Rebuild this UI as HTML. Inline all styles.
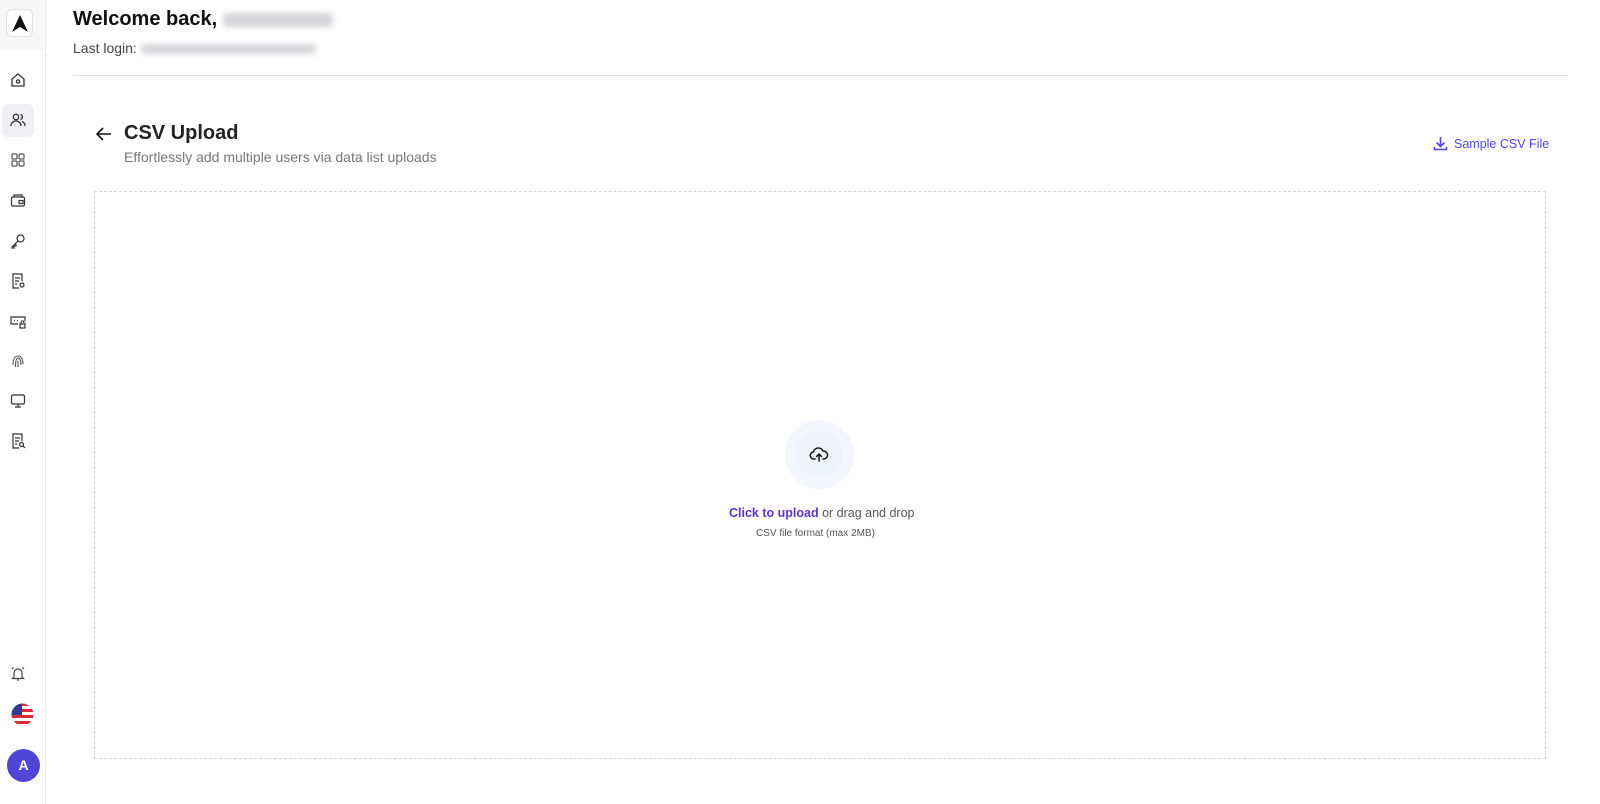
<!DOCTYPE html>
<html><head><meta charset="utf-8"><style>
*{margin:0;padding:0;box-sizing:border-box}
body{width:1600px;height:804px;background:#fff;font-family:"Liberation Sans",Arial,sans-serif;position:relative;overflow:hidden;color:#111}
.sb{position:absolute;left:0;top:0;width:46px;height:804px;border-right:1px solid #e8e8ea;background:#fff}
.logo{position:absolute;left:0;top:0;width:45px;height:50px;background:#f7f7f8}
.logobox{position:absolute;left:6px;top:9px;width:27px;height:28px;border:1px solid #e2e2e4;border-radius:6px;background:#fff}
.ic{position:absolute;left:9px;width:18px;height:18px}
.act{position:absolute;left:2px;top:104px;width:32px;height:33px;background:#f0f0f4;border-radius:6px}
.abs{position:absolute;white-space:nowrap}
.blur{display:inline-block;background:#d6d6d9;filter:blur(3px);border-radius:4px;vertical-align:middle}
</style></head><body>
<div class="sb">
<div class="logo"><div class="logobox"><svg width="27" height="28" viewBox="0 0 27 28"><path d="M13 5 L21 22 L13 17 L5 22 Z" fill="#111"/></svg></div></div>
<div class="act"></div>
<svg class="ic" style="top:71px" viewBox="0 0 18 18" fill="none" stroke="#333" stroke-width="1.3"><path d="M3 8 L9 3 L15 8 V15 H3 Z"/><circle cx="9" cy="10.5" r="1.6"/></svg>
<svg class="ic" style="top:111px" viewBox="0 0 18 18" fill="none" stroke="#333" stroke-width="1.3"><circle cx="7" cy="6" r="2.7"/><path d="M2 15c0-3 2.3-5 5-5s5 2 5 5"/><path d="M11.5 3.5a2.6 2.6 0 0 1 0 5M13 10.5c2 .6 3 2.4 3 4.5"/></svg>
<svg class="ic" style="top:151px" viewBox="0 0 18 18" fill="none" stroke="#555" stroke-width="1.2"><rect x="3" y="3" width="5" height="5" rx="1"/><rect x="10" y="3" width="5" height="5" rx="1"/><rect x="3" y="10" width="5" height="5" rx="1"/><rect x="10" y="10" width="5" height="5" rx="1"/></svg>
<svg class="ic" style="top:191px" viewBox="0 0 18 18" fill="none" stroke="#333" stroke-width="1.2"><rect x="2.5" y="6" width="13" height="9" rx="1.5"/><path d="M5 6V4h8v2"/><rect x="10" y="9.5" width="4" height="3"/></svg>
<svg class="ic" style="top:232px" viewBox="0 0 18 18" fill="none" stroke="#333" stroke-width="1.2"><circle cx="11.5" cy="6.5" r="3.5"/><path d="M9 9 L3 15 L3 16 L5 16 L5 14 L7 14 L7 12"/></svg>
<svg class="ic" style="top:272px" viewBox="0 0 18 18" fill="none" stroke="#333" stroke-width="1.2"><path d="M10 16H4V2h9v7"/><path d="M6 6h5M6 9h4M6 12h2"/><circle cx="13" cy="13" r="2"/></svg>
<svg class="ic" style="top:312px" viewBox="0 0 18 18" fill="none" stroke="#333" stroke-width="1.2"><path d="M9 12H2V5h14v4"/><path d="M5 8.5h1M8 8.5h1"/><rect x="11" y="12" width="5" height="4"/><path d="M12 12v-1.5a1.5 1.5 0 0 1 3 0V12"/></svg>
<svg class="ic" style="top:352px" viewBox="0 0 18 18" fill="none" stroke="#555" stroke-width="1.1"><path d="M4 13c0-6 2-9 5-9s5 3 5 8M6.5 15c0-2 0-9 2.5-9s3 3 3 7M9 9v6"/></svg>
<svg class="ic" style="top:392px" viewBox="0 0 18 18" fill="none" stroke="#333" stroke-width="1.2"><rect x="2.5" y="3" width="13" height="9" rx="1.5"/><path d="M9 12v3M6 15h6"/></svg>
<svg class="ic" style="top:432px" viewBox="0 0 18 18" fill="none" stroke="#333" stroke-width="1.2"><path d="M10 16H4V2h9v7"/><path d="M6 6h5M6 9h4M6 12h2"/><circle cx="12.5" cy="12.5" r="2"/><path d="M14 14l2 2"/></svg>
<svg class="ic" style="top:664px" viewBox="0 0 18 18" fill="none" stroke="#444" stroke-width="1.2"><path d="M5 13V9a4 4 0 0 1 8 0v4l1.5 1.5h-11Z"/><path d="M8 16h2M3 5l1.5-1.5M15 5l-1.5-1.5"/></svg>
<svg style="position:absolute;left:11px;top:703px" width="23" height="23" viewBox="0 0 23 23"><defs><clipPath id="c"><circle cx="11.5" cy="11.5" r="11"/></clipPath></defs><g clip-path="url(#c)"><rect width="23" height="23" fill="#fff"/><rect y="0" width="23" height="3" fill="#d82b3a"/><rect y="6" width="23" height="3" fill="#d82b3a"/><rect y="12" width="23" height="3" fill="#d82b3a"/><rect y="18" width="23" height="3" fill="#d82b3a"/><rect width="11" height="12" fill="#2f3c8f"/></g></svg>
<div style="position:absolute;left:7px;top:749px;width:33px;height:33px;border-radius:50%;background:#4f46d6;color:#fff;font-weight:bold;font-size:14px;text-align:center;line-height:33px">A</div>
</div>
<div class="abs" style="left:73px;top:8px;font-size:20px;font-weight:bold;color:#111">Welcome back, <span class="blur" style="width:110px;height:14px"></span></div>
<div class="abs" style="left:73px;top:40px;font-size:14px;color:#444">Last login: <span class="blur" style="width:175px;height:10px"></span></div>
<div style="position:absolute;left:73px;top:75px;width:1495px;height:1px;background:#e2e2e4"></div>
<svg style="position:absolute;left:95px;top:126px" width="18" height="16" viewBox="0 0 18 16" fill="none" stroke="#111" stroke-width="1.6"><path d="M16 8H2M8 2L2 8l6 6"/></svg>
<div class="abs" style="left:124px;top:122px;font-size:20px;font-weight:bold;color:#222">CSV Upload</div>
<div class="abs" style="left:124px;top:149px;font-size:14px;color:#777">Effortlessly add multiple users via data list uploads</div>
<svg style="position:absolute;left:1433px;top:136px" width="15" height="15" viewBox="0 0 15 15" fill="none" stroke="#4f46e5" stroke-width="1.6"><path d="M7.5 1v9M3.5 6.5l4 4 4-4M1.5 11v2.5h12V11"/></svg>
<div class="abs" style="left:1454px;top:137px;font-size:12.5px;color:#5046e5">Sample CSV File</div>
<div style="position:absolute;left:94px;top:191px;width:1452px;height:568px;border:1px dashed #d4d4d8"></div>
<div style="position:absolute;left:785px;top:420px;width:69px;height:69px;border-radius:50%;background:#f3f6fc"></div>
<div style="position:absolute;left:796px;top:431px;width:47px;height:47px;border-radius:50%;background:#eef3fb"></div>
<svg style="position:absolute;left:809px;top:444px" width="20" height="20" viewBox="0 0 20 20" fill="none" stroke="#111" stroke-width="1.5" stroke-linecap="round"><path d="M6 15H5a3.5 3.5 0 0 1-.5-7A5 5 0 0 1 14 7a3.5 3.5 0 0 1 1 8h-1"/><path d="M10 17v-7M7.5 12.5L10 10l2.5 2.5"/></svg>
<div class="abs" style="left:729px;top:506px;font-size:12.5px;color:#555"><b style="color:#5b35c9">Click to upload</b> or drag and drop</div>
<div class="abs" style="left:756px;top:528px;font-size:10px;color:#555">CSV file format (max 2MB)</div>
</body></html>
